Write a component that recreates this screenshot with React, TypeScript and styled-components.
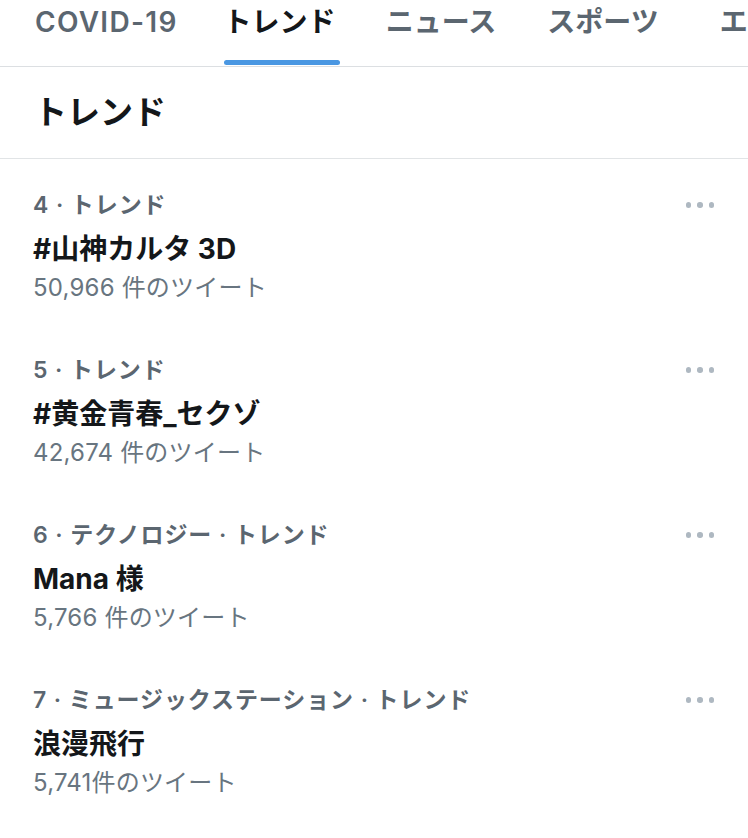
import React from "react";
import styled, { createGlobalStyle } from "styled-components";

const Global = createGlobalStyle`
  html, body { margin: 0; padding: 0; background: #ffffff; }
  body { font-family: "Inter", "Noto Sans CJK JP", sans-serif; -webkit-font-smoothing: antialiased; }
  * { box-sizing: border-box; }
`;

const Page = styled.div`
  width: 748px;
  min-height: 838px;
  background: #fff;
  overflow: hidden;
`;

const TabBar = styled.nav`
  display: flex;
  height: 67px;
  padding-left: 35px;
  border-bottom: 1px solid #dcdfe2;
  white-space: nowrap;
  overflow: hidden;
`;

const Tab = styled.div<{ $gap: number }>`
  display: flex;
  flex-direction: column;
  justify-content: space-between;
  flex-shrink: 0;
  height: 66px;
  margin-right: ${(p) => p.$gap}px;
`;

const TabLabel = styled.span<{ $active?: boolean; $tracking: number }>`
  font-size: 28px;
  line-height: 44px;
  font-weight: ${(p) => (p.$active ? 700 : 600)};
  letter-spacing: ${(p) => p.$tracking}px;
  color: ${(p) => (p.$active ? "#14171a" : "#5b6670")};
`;

const Underline = styled.span<{ $active?: boolean }>`
  display: block;
  height: 5px;
  margin: 0 -4px 1px 0;
  border-radius: 3px;
  background: ${(p) => (p.$active ? "#4a97e2" : "transparent")};
`;

const Header = styled.h2`
  margin: 0;
  height: 92px;
  padding-left: 34px;
  font-size: 33px;
  line-height: 90px;
  font-weight: 700;
  color: #14171a;
  border-bottom: 1px solid #e1e4e6;
`;

const Item = styled.div`
  display: grid;
  grid-template-columns: 1fr auto;
  height: 165px;
  padding: 24px 34px 0 33px;
`;

const Body = styled.div`
  display: flex;
  flex-direction: column;
`;

const Meta = styled.div`
  font-size: 23px;
  line-height: 44px;
  font-weight: 600;
  letter-spacing: 0.9px;
  color: #5b6670;
  white-space: nowrap;
`;

const Title = styled.div`
  font-size: 28px;
  line-height: 44px;
  font-weight: 700;
  color: #14171a;
  white-space: nowrap;
`;

const Count = styled.div`
  font-size: 24px;
  line-height: 34px;
  letter-spacing: 0.2px;
  color: #687580;
  white-space: nowrap;
`;

const Dots = styled.div`
  display: flex;
  align-items: center;
  gap: 6px;
  height: 44px;
`;

const Dot = styled.span`
  width: 5.5px;
  height: 5.5px;
  border-radius: 50%;
  background: #aeb8c1;
`;

const tabs = [
  { label: "COVID-19", gap: 46, tracking: 1.3 },
  { label: "トレンド", gap: 50, tracking: 0 },
  { label: "ニュース", gap: 51, tracking: 0 },
  { label: "スポーツ", gap: 61, tracking: 0 },
  { label: "エンタメ", gap: 0, tracking: 0 },
];

const trends = [
  { meta: "4 · トレンド", title: "#山神カルタ 3D", count: "50,966 件のツイート" },
  { meta: "5 · トレンド", title: "#黄金青春_セクゾ", count: "42,674 件のツイート" },
  { meta: "6 · テクノロジー · トレンド", title: "Mana 様", count: "5,766 件のツイート" },
  { meta: "7 · ミュージックステーション · トレンド", title: "浪漫飛行", count: "5,741件のツイート" },
];

export default function App() {
  return (
    <Page>
      <Global />
      <TabBar>
        {tabs.map((t) => (
          <Tab key={t.label} $gap={t.gap}>
            <TabLabel $active={t.label === "トレンド"} $tracking={t.tracking}>
              {t.label}
            </TabLabel>
            <Underline $active={t.label === "トレンド"} />
          </Tab>
        ))}
      </TabBar>
      <Header>トレンド</Header>
      {trends.map((t) => (
        <Item key={t.title}>
          <Body>
            <Meta>{t.meta}</Meta>
            <Title>{t.title}</Title>
            <Count>{t.count}</Count>
          </Body>
          <Dots>
            <Dot />
            <Dot />
            <Dot />
          </Dots>
        </Item>
      ))}
    </Page>
  );
}
